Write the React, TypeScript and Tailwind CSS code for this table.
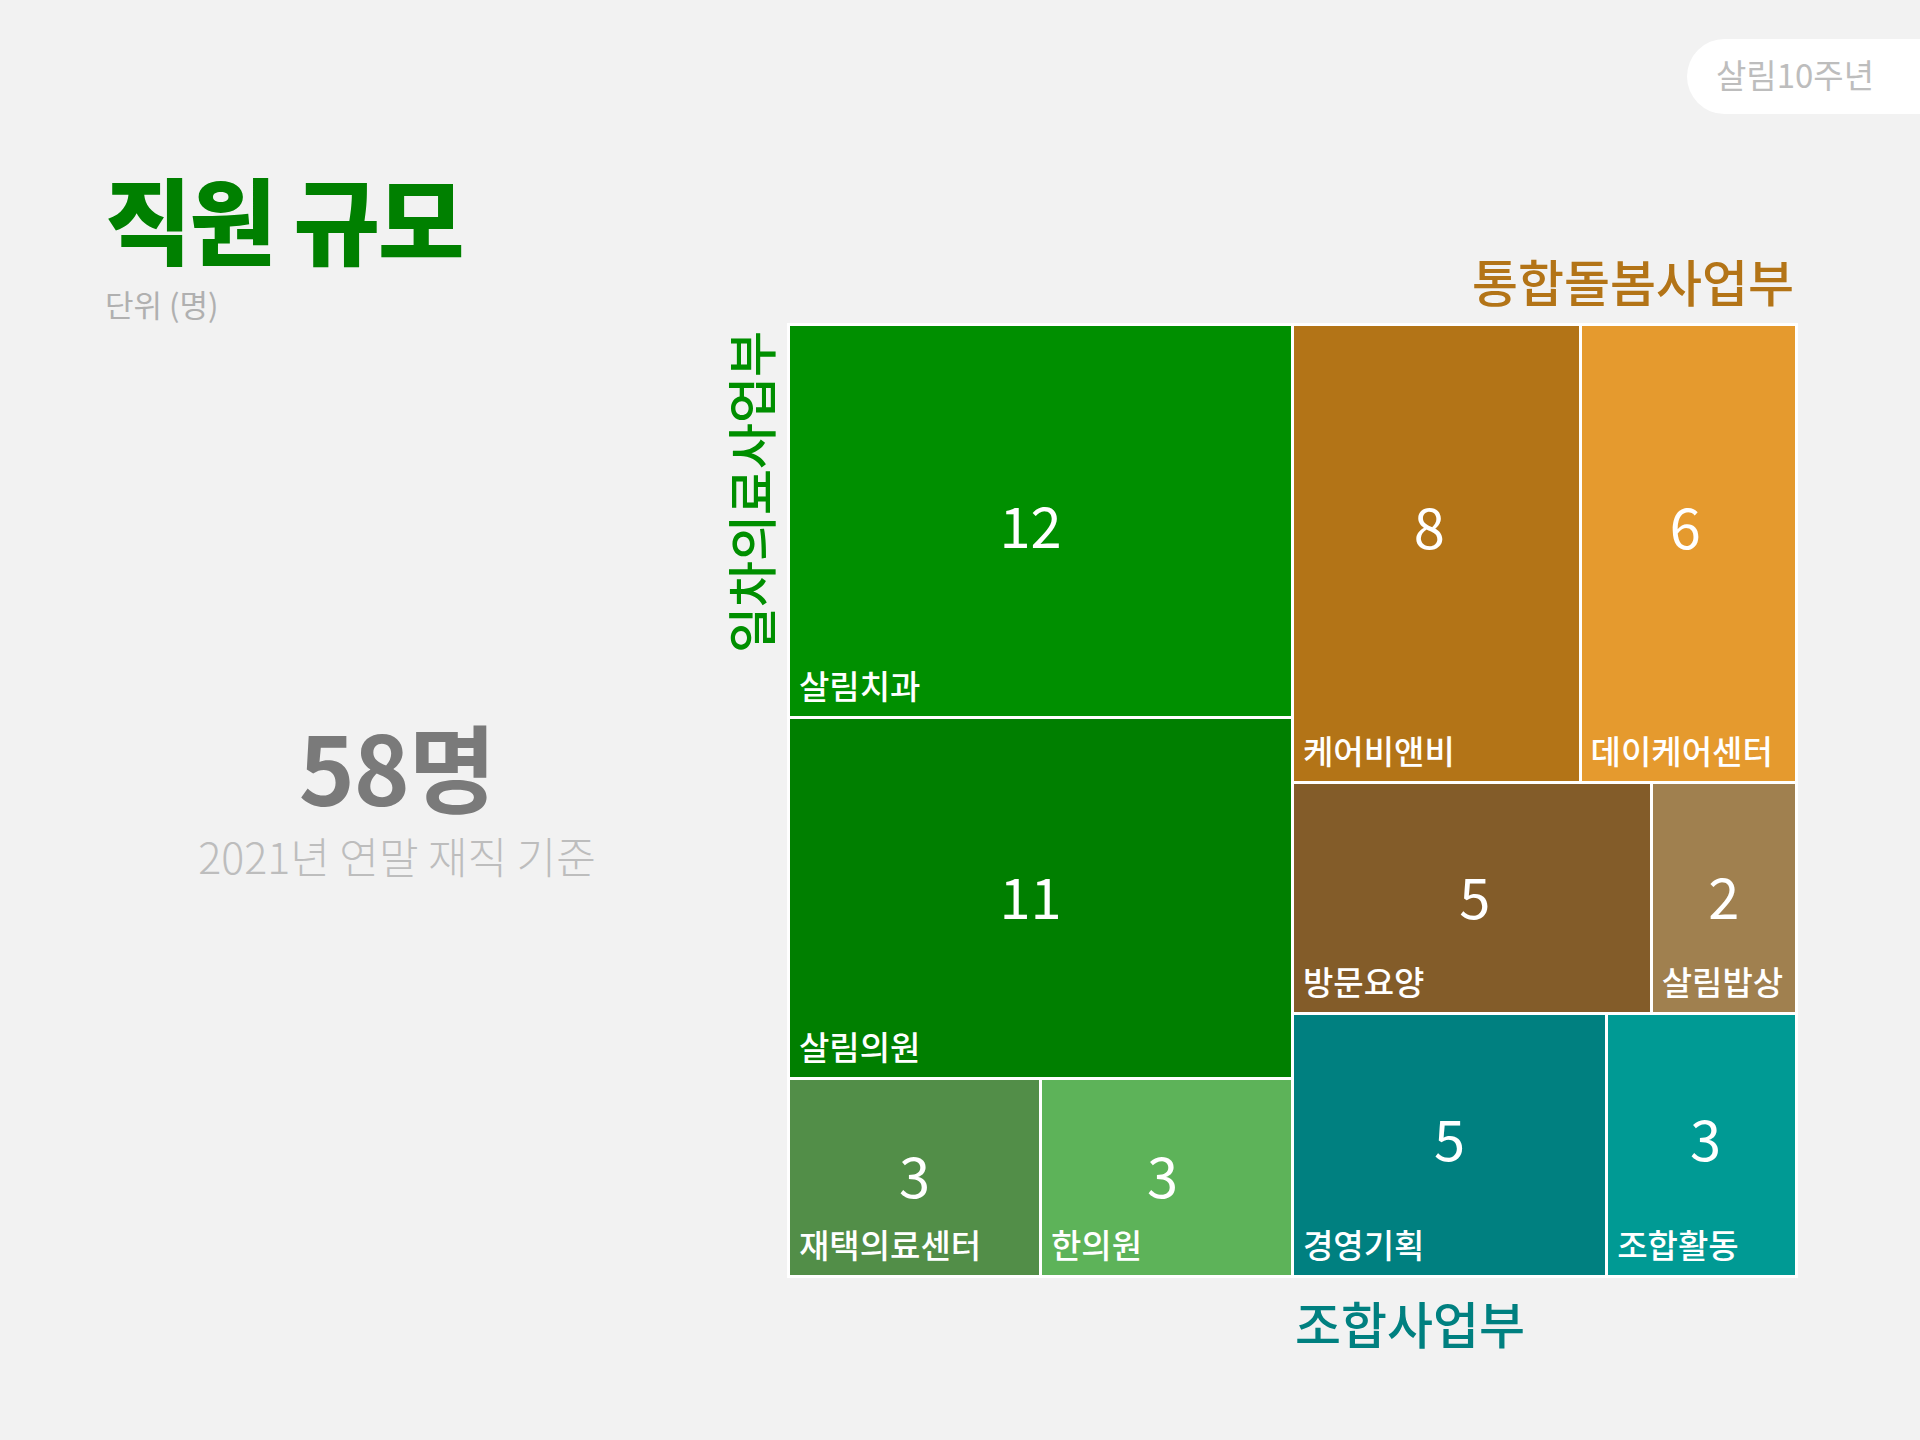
import type { ReactNode } from 'react';

const font = { fontFamily: '"Noto Sans CJK KR", "Noto Sans", sans-serif' };

function Cell({
  value,
  label,
  color,
  grow,
  numCls = 'pb-[6px]',
}: {
  value: number;
  label: string;
  color: string;
  grow: string;
  numCls?: string;
}) {
  return (
    <div className={`grid min-h-0 min-w-0 basis-0 ${grow} ${color}`}>
      <div
        className={`[grid-area:1/1] place-self-center text-[56px] leading-none font-normal text-white ${numCls}`}
      >
        {value}
      </div>
      <div className="[grid-area:1/1] self-end justify-self-start pl-[9px] pb-[14px] text-[33px] leading-none font-medium text-white whitespace-nowrap">
        {label}
      </div>
    </div>
  );
}

function Row({ grow, children }: { grow: string; children: ReactNode }) {
  return <div className={`flex min-h-0 basis-0 gap-[3px] ${grow}`}>{children}</div>;
}

export default function App() {
  return (
    <div className="relative flex w-[1920px] h-[1440px] bg-[#f2f2f2] overflow-hidden" style={font}>
      {/* left column */}
      <div className="flex w-[727px] shrink-0 flex-col pt-[170px]">
        <div className="pl-[105px]">
          <h1 className="text-[94px] leading-none font-black tracking-[-2px] text-[#008000]">직원 규모</h1>
          <div className="mt-[24px] text-[31px] leading-none font-normal text-[#b0b0b0]">단위 (명)</div>
        </div>
        <div className="mt-[398px] pl-[67px] text-center">
          <div className="text-[95px] leading-none font-bold tracking-[-1px] text-[#7a7a7a]">58명</div>
          <div className="mt-[22px] text-[43px] leading-none font-light text-[#bdbdbd]">2021년 연말 재직 기준</div>
        </div>
      </div>

      {/* treemap section */}
      <div className="flex w-[1071px] shrink-0 flex-col pt-[255px]">
        <div className="self-end pr-[4px] text-[50px] leading-none font-medium text-[#b37417]">
          통합돌봄사업부
        </div>
        <div className="mt-[18px] flex">
          <div className="w-[48px] shrink-0 pt-[8px] mr-[12px]">
            <div className="-ml-[3px] [writing-mode:vertical-rl] [text-orientation:sideways] rotate-180 text-[50px] leading-none font-medium text-[#008f00]">
              일차의료사업부
            </div>
          </div>
          <div className="flex h-[955px] w-[1011px] gap-[3px] bg-white p-[3px]">
            <div className="flex flex-1 flex-col gap-[3px]">
              <Row grow="grow-[12]">
                <Cell value={12} label="살림치과" color="bg-[#008f00]" grow="grow" numCls="pt-[6px] pr-[20px]" />
              </Row>
              <Row grow="grow-[11]">
                <Cell value={11} label="살림의원" color="bg-[#007f00]" grow="grow" numCls="pb-[6px] pr-[20px]" />
              </Row>
              <Row grow="grow-[6]">
                <Cell value={3} label="재택의료센터" color="bg-[#528e48]" grow="grow" />
                <Cell value={3} label="한의원" color="bg-[#5db359]" grow="grow" numCls="pb-[6px] pr-[8px]" />
              </Row>
            </div>
            <div className="flex flex-1 flex-col gap-[3px]">
              <Row grow="grow-[14]">
                <Cell value={8} label="케어비앤비" color="bg-[#b37417]" grow="grow-[8]" numCls="pb-[58px] pr-[14px]" />
                <Cell value={6} label="데이케어센터" color="bg-[#e59a2e]" grow="grow-[6]" numCls="pb-[58px] pr-[6px]" />
              </Row>
              <Row grow="grow-[7]">
                <Cell value={5} label="방문요양" color="bg-[#835c29]" grow="grow-[5]" numCls="pb-[6px] pl-[6px]" />
                <Cell value={2} label="살림밥상" color="bg-[#a0804f]" grow="grow-[2]" />
              </Row>
              <Row grow="grow-[8]">
                <Cell value={5} label="경영기획" color="bg-[#008080]" grow="grow-[5]" numCls="pb-[16px]" />
                <Cell value={3} label="조합활동" color="bg-[#009a94]" grow="grow-[3]" numCls="pb-[16px] pl-[8px]" />
              </Row>
            </div>
          </div>
        </div>
        <div className="mt-[19px] pl-[568px] text-[50px] leading-none font-medium text-[#008080]">
          조합사업부
        </div>
      </div>

      {/* anniversary badge */}
      <div className="absolute right-0 top-[39px] flex h-[75px] w-[233px] items-center rounded-l-full bg-white pb-[5px] pl-[29px]">
        <span className="text-[33px] leading-none font-normal text-[#bdbdbd]">살림10주년</span>
      </div>
    </div>
  );
}
